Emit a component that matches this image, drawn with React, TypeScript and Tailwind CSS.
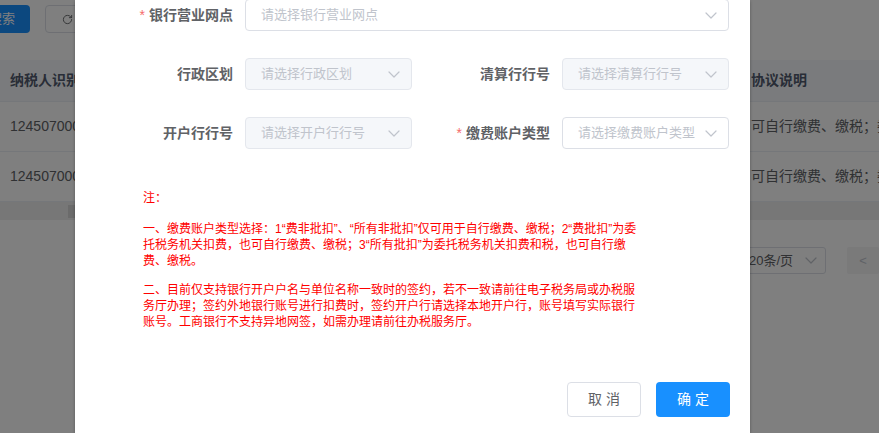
import React from 'react';
import { RotateCw } from 'lucide-react';

const Arrow: React.FC = () => (
    <svg width="12" height="7" viewBox="0 0 12 7" fill="none" className="shrink-0">
        <path d="M1 1l5 5 5-5" stroke="#c0c4cc" strokeWidth="1.2" strokeLinecap="round" strokeLinejoin="round" />
    </svg>
);

interface SelectProps {
    placeholder: string;
    disabled?: boolean;
}

const Select: React.FC<SelectProps> = ({ placeholder, disabled }) => (
    <div
        className={`flex-1 h-[32px] flex items-center justify-between pl-[15px] pr-[11px] rounded-[4px] border ${
            disabled ? 'bg-[#f5f7fa] border-[#e4e7ed]' : 'bg-white border-[#dcdfe6]'
        }`}
    >
        <span className="text-[13px] text-[#c0c4cc] whitespace-nowrap overflow-hidden">{placeholder}</span>
        <Arrow />
    </div>
);

interface FieldProps {
    label: string;
    required?: boolean;
    children: React.ReactNode;
}

const Field: React.FC<FieldProps> = ({ label, required, children }) => (
    <div className="flex items-center flex-1">
        <label className="w-[130px] shrink-0 pr-[12px] text-right text-[14px] font-bold text-[#606266] whitespace-nowrap">
            {required && <span className="text-[#f56c6c] font-normal mr-[4px]">*</span>}
            {label}
        </label>
        {children}
    </div>
);

const rows = [
    { taxId: '124507000012345678', desc: '可自行缴费、缴税；委托税务机关扣费' },
    { taxId: '124507000087654321', desc: '可自行缴费、缴税；委托税务机关扣费' },
];

export default function App() {
    return (
        <div className="relative w-[879px] h-[433px] overflow-hidden bg-white font-['Liberation_Sans','Noto_Sans_CJK_SC',sans-serif]">
            {/* page behind the dialog */}
            <div className="pt-[5px] flex items-center -ml-[26px] gap-[15px]">
                <button className="w-[56px] h-[28px] rounded-[4px] bg-[#1890ff] text-white text-[13px]">搜索</button>
                <button className="w-[80px] h-[28px] rounded-[4px] border border-[#dcdfe6] flex items-center gap-[5px] pl-[16px] text-[13px] text-[#606266]">
                    <RotateCw size={11} />
                    重置
                </button>
            </div>

            <div className="mt-[27px] text-[14px]">
                <div className="flex h-[42px] items-center bg-[#f5f7fa] border-b border-[#ebeef5] font-bold text-[#515a6e]">
                    <div className="w-[190px] pl-[10px] whitespace-nowrap overflow-hidden">纳税人识别号</div>
                    <div className="w-[551px] pl-[10px] whitespace-nowrap overflow-hidden">纳税人名称</div>
                    <div className="flex-1 pl-[10px] whitespace-nowrap overflow-hidden">协议说明</div>
                </div>
                {rows.map(row => (
                    <div key={row.taxId} className="flex h-[50px] items-center border-b border-[#ebeef5] text-[#606266]">
                        <div className="w-[190px] pl-[10px] whitespace-nowrap overflow-hidden">{row.taxId}</div>
                        <div className="w-[551px] pl-[10px] whitespace-nowrap overflow-hidden">某某单位</div>
                        <div className="flex-1 pl-[10px] whitespace-nowrap overflow-hidden">{row.desc}</div>
                    </div>
                ))}
                <div className="h-[18px] bg-[#efefef] pt-[3px]">
                    <div className="ml-[68px] w-[80px] h-[13px] bg-[#d6d6d6]" />
                </div>
            </div>

            <div className="mt-[27px] flex items-center gap-[21px] pl-[726px] text-[13px] text-[#606266]">
                <div className="w-[100px] h-[27px] shrink-0 rounded-[3px] border border-[#dcdfe6] flex items-center justify-between pl-[22px] pr-[8px]">
                    <span>20条/页</span>
                    <Arrow />
                </div>
                <div className="w-[32px] h-[27px] shrink-0 rounded-[2px] bg-[#f4f4f5] flex items-center justify-center text-[#c0c4cc]">
                    &lt;
                </div>
            </div>

            {/* overlay */}
            <div className="absolute inset-0 bg-black/50" />

            {/* dialog */}
            <div className="absolute left-[75px] top-0 bottom-0 w-[675px] bg-white shadow-[0_1px_3px_rgba(0,0,0,0.3)]">
                <div className="pl-[40px] pr-[21px] -mt-[1px]">
                    <div className="flex">
                        <Field label="银行营业网点" required>
                            <Select placeholder="请选择银行营业网点" />
                        </Field>
                    </div>
                    <div className="flex gap-[20px] mt-[27px]">
                        <Field label="行政区划">
                            <Select placeholder="请选择行政区划" disabled />
                        </Field>
                        <Field label="清算行行号">
                            <Select placeholder="请选择清算行行号" disabled />
                        </Field>
                    </div>
                    <div className="flex gap-[20px] mt-[27px]">
                        <Field label="开户行行号">
                            <Select placeholder="请选择开户行行号" disabled />
                        </Field>
                        <Field label="缴费账户类型" required>
                            <Select placeholder="请选择缴费账户类型" />
                        </Field>
                    </div>
                </div>

                <div className="ml-[68px] mt-[41px] w-[495px] text-[12px] leading-[16px] text-[#ff0000]">
                    <p>注：</p>
                    <p className="mt-[15px]">
                        一、缴费账户类型选择：1“费非批扣”、“所有非批扣”仅可用于自行缴费、缴税；2“费批扣”为委托税务机关扣费，也可自行缴费、缴税；3“所有批扣”为委托税务机关扣费和税，也可自行缴费、缴税。
                    </p>
                    <p className="mt-[13px]">
                        二、目前仅支持银行开户户名与单位名称一致时的签约，若不一致请前往电子税务局或办税服务厅办理；签约外地银行账号进行扣费时，签约开户行请选择本地开户行，账号填写实际银行账号。工商银行不支持异地网签，如需办理请前往办税服务厅。
                    </p>
                </div>

                <div className="absolute right-[20px] top-[382px] flex gap-[15px]">
                    <button className="w-[74px] h-[35px] rounded-[4px] border border-[#dcdfe6] bg-white text-[14px] text-[#606266]">
                        取 消
                    </button>
                    <button className="w-[74px] h-[35px] rounded-[4px] bg-[#1890ff] text-[14px] text-white">
                        确 定
                    </button>
                </div>
            </div>
        </div>
    );
}
